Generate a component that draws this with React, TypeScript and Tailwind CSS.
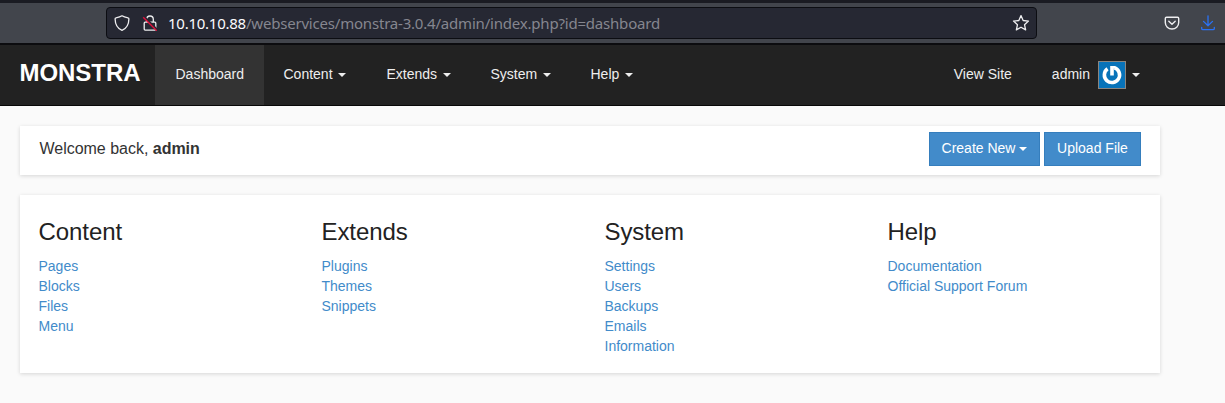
import React from "react";

const Caret = ({ className = "" }: { className?: string }) => (
  <span
    className={`inline-block h-0 w-0 border-x-4 border-t-4 border-x-transparent align-middle ${className}`}
  />
);

const menus = [
  { label: "Content", width: "w-[103px]" },
  { label: "Extends", width: "w-[104px]" },
  { label: "System", width: "w-[100px]" },
  { label: "Help", width: "w-[82px]" },
];

const columns = [
  { title: "Content", links: ["Pages", "Blocks", "Files", "Menu"] },
  { title: "Extends", links: ["Plugins", "Themes", "Snippets"] },
  { title: "System", links: ["Settings", "Users", "Backups", "Emails", "Information"] },
  { title: "Help", links: ["Documentation", "Official Support Forum"] },
];

function BrowserBar() {
  return (
    <div className="flex h-[45px] items-start border-t-[3px] border-b-2 border-t-[#1a1b22] border-b-[#0c0c0f] bg-[#42454c] pt-1 pl-[106px]">
      <div className="flex h-8 w-[931px] items-center rounded-[4px] border border-[#0c0d12] bg-[#262833] pl-[7px] pr-[6px]">
        <svg width="16" height="16" viewBox="0 0 16 16" fill="none" stroke="#eeeef0" strokeWidth="1.3" strokeLinejoin="round">
          <path d="M8 .8C6.2 2 4 2.5 2 2.9c-.6.1-.9.5-.9 1.1C1.2 9.3 3.5 13.5 8 15.3c4.5-1.8 6.800-6 6.900-11.300 0-.6-.3-1-.9-1.100C12 2.500 9.800 2 8 .8Z" />
        </svg>
        <svg className="ml-3" width="16" height="16" viewBox="0 0 16 16" fill="none">
          <path d="M4.700 7V4.300a3.300 3.300 0 0 1 6.600 0V7M3.200 7.200h9.600c.6 0 1 .4 1 1v5.900c0 .6-.4 1-1 1H3.200c-.6 0-1-.4-1-1V8.200c0-.6.4-1 1-1Z" stroke="#eeeef0" strokeWidth="1.300" />
          <path d="M2.200 1.700 15.200 14.700" stroke="#262833" strokeWidth="2" />
          <path d="M1.200 2.200 14.700 15.700" stroke="#e3103c" strokeWidth="1.400" />
        </svg>
        <div className="ml-[10px] flex-1 whitespace-nowrap font-['Noto_Sans',sans-serif] text-[15px] leading-[22px] tracking-[-0.2px] text-[#85868f]">
          <span className="tracking-[-0.25px] text-[#fbfbfe]">10.10.10.88</span>/webservices/monstra-3.0.4/admin/index.php?id=dashboard
        </div>
        <svg width="18" height="18" viewBox="0 0 18 18" fill="none" stroke="#eeeef0" strokeWidth="1.300" strokeLinejoin="round">
          <path d="m9 1.600 2.150 4.900 5.350.55-4 3.600 1.150 5.250L9 13.200l-4.650 2.700 1.150-5.250-4-3.600 5.350-.55L9 1.600Z" />
        </svg>
      </div>
      <svg className="ml-[127px] mt-2" width="16" height="16" viewBox="0 0 16 16" fill="none" stroke="#eeeef0" strokeWidth="1.400" strokeLinecap="round" strokeLinejoin="round">
        <path d="M2.500 2.300h11c.7 0 1.200.5 1.200 1.200v4C14.700 11.200 11.700 14 8 14s-6.700-2.800-6.700-6.500v-4c0-.7.5-1.200 1.200-1.200Z" />
        <path d="m4.800 6.200 3.200 3 3.200-3" />
      </svg>
      <svg className="ml-5 mt-2" width="16" height="16" viewBox="0 0 16 16" fill="none" stroke="#2a72f5" strokeWidth="1.300" strokeLinecap="round" strokeLinejoin="round">
        <path d="M8 .8v9.700M3.500 6.400 8 10.700l4.500-4.300M1.700 12.500v.9c0 .8.500 1.300 1.300 1.300h10c.8 0 1.300-.5 1.300-1.300v-.9" />
      </svg>
    </div>
  );
}

export default function App() {
  return (
    <div className="h-[403px] w-[1225px] overflow-hidden bg-[#fafafa] font-['Liberation_Sans',Arial,sans-serif] text-sm leading-5 text-[#333]">
      <BrowserBar />
      <nav className="flex h-[61px] border-b border-[#080808] bg-[#222] text-[#eee]">
        <div className="w-[155px] pl-[19.5px] pt-[15px] text-2xl font-bold leading-[26px] tracking-[-0.05px] text-white">
          MONSTRA
        </div>
        <div className="w-[109px] bg-[#333] pl-[20.5px] pt-[19px]">Dashboard</div>
        {menus.map((m) => (
          <div key={m.label} className={`${m.width} whitespace-nowrap pl-[19.5px] pt-[19px]`}>
            {m.label} <Caret className="ml-0.5" />
          </div>
        ))}
        <div className="ml-auto flex pr-[85px]">
          <div className="pl-5 pr-5 pt-[19px]">View Site</div>
          <div className="flex pl-5 pt-[19px]">
            <span>admin</span>
            <svg className="-mt-[3px] ml-2" width="28" height="28" viewBox="0 0 28 28" fill="none">
              <rect x=".5" y=".5" width="27" height="27" fill="#0873b9" stroke="#8a8580" />
              <path d="M9.500 7.800A7.600 7.600 0 1 0 16.500 6.800" stroke="#fff" strokeWidth="3.600" />
              <path d="M12.200 4.900h4.800v2.600h-1.200v7h-3.600Z" fill="#fff" />
            </svg>
            <Caret className="ml-1.5 mt-[9px]" />
          </div>
        </div>
      </nav>

      <main className="ml-5 mt-5 w-[1140px]">
        <section className="flex h-[49px] justify-between bg-white pl-[19.5px] pr-[19px] pt-1.5 shadow-[0_1px_4px_rgba(0,0,0,0.15)]">
          <div className="pt-1.5 text-base leading-[22px] tracking-[-0.02px]">
            Welcome back, <strong>admin</strong>
          </div>
          <div className="flex gap-1 text-white">
            <button className="h-[34px] w-[111px] whitespace-nowrap border border-[#357ebd] bg-[#428bca] pb-0.5">
              Create New<Caret className="ml-1" />
            </button>
            <button className="h-[34px] w-[97px] whitespace-nowrap border border-[#357ebd] bg-[#428bca] pb-0.5">
              Upload File
            </button>
          </div>
        </section>

        <section className="mt-5 grid h-[178px] grid-cols-[repeat(4,283px)] bg-white pl-[18.5px] pt-6 shadow-[0_1px_4px_rgba(0,0,0,0.15)]">
          {columns.map((c) => (
            <div key={c.title}>
              <h3 className="mb-[11px] text-2xl leading-[26px] tracking-[-0.08px] text-[#222]">{c.title}</h3>
              <ul className="text-[#428bca]">
                {c.links.map((l) => (
                  <li key={l}>{l}</li>
                ))}
              </ul>
            </div>
          ))}
        </section>
      </main>
    </div>
  );
}
